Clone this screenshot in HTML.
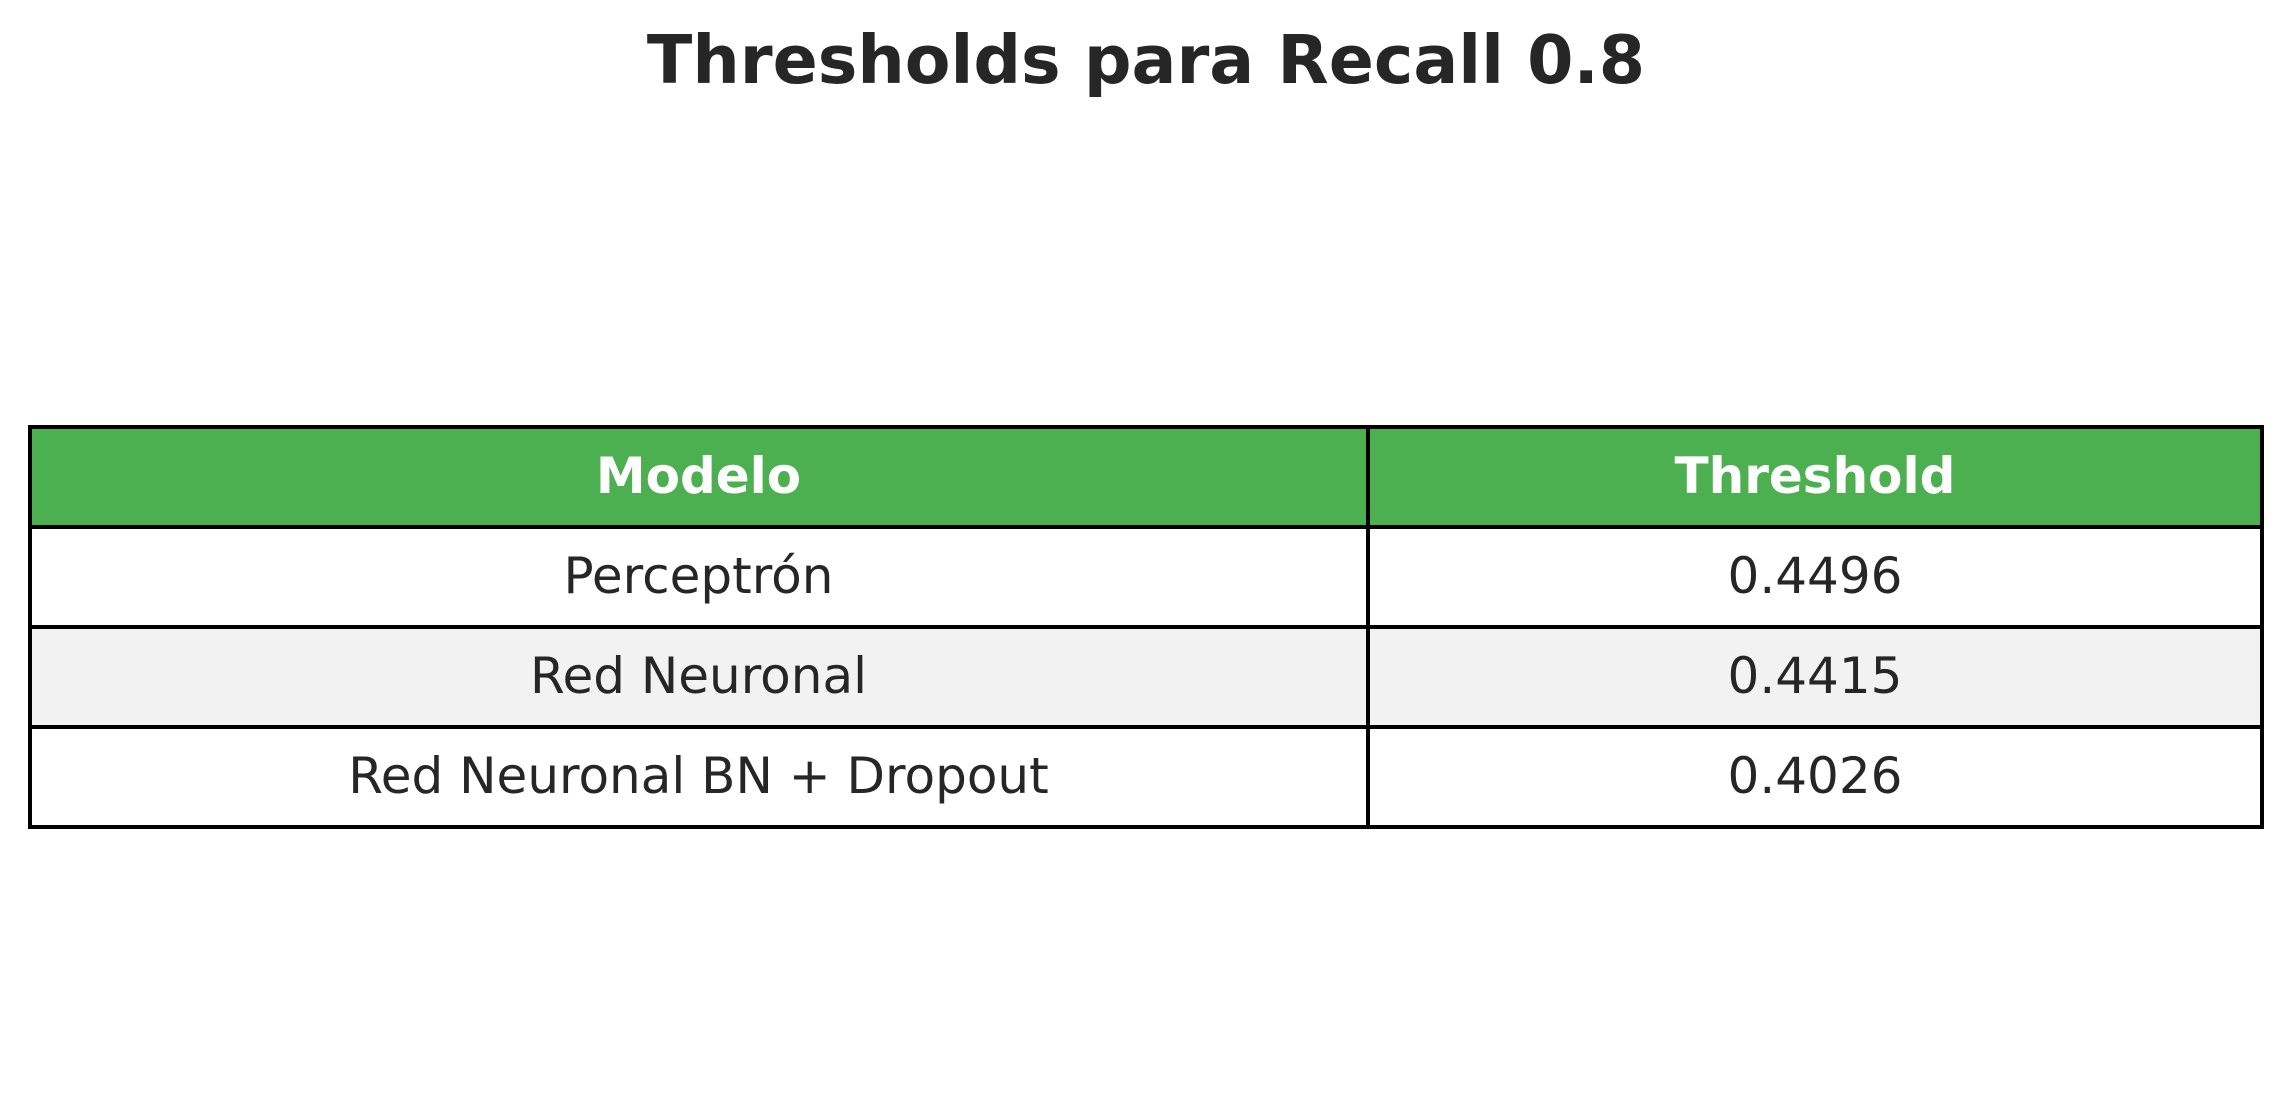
<!DOCTYPE html>
<html><head><meta charset="utf-8"><style>
html,body{margin:0;padding:0;background:#fff;width:2292px;height:1119px;overflow:hidden;position:relative;font-family:"DejaVu Sans","Liberation Sans",sans-serif;color:#262626}
.title{position:absolute;left:0;width:2292px;top:18px;text-align:center;font-weight:bold;font-size:66.6px;line-height:84px}
.c{position:absolute;display:flex;align-items:center;justify-content:center;font-size:50px;box-sizing:border-box;padding-bottom:3px}
.line{position:absolute;background:#000}
</style></head><body>
<div class="title">Thresholds para Recall 0.8</div>
<div style="position:absolute;left:29px;top:427px;width:2233px;height:100px;background:#4caf50"></div>
<div style="position:absolute;left:29px;top:627px;width:2233px;height:100px;background:#f2f2f2"></div>
<div class="c" style="left:29px;top:427px;width:1339px;height:100px;color:#fff;font-weight:bold">Modelo</div>
<div class="c" style="left:1368px;top:427px;width:894px;height:100px;color:#fff;font-weight:bold">Threshold</div>
<div class="c" style="left:29px;top:527px;width:1339px;height:100px">Perceptrón</div>
<div class="c" style="left:1368px;top:527px;width:894px;height:100px">0.4496</div>
<div class="c" style="left:29px;top:627px;width:1339px;height:100px">Red Neuronal</div>
<div class="c" style="left:1368px;top:627px;width:894px;height:100px">0.4415</div>
<div class="c" style="left:29px;top:727px;width:1339px;height:100px">Red Neuronal BN + Dropout</div>
<div class="c" style="left:1368px;top:727px;width:894px;height:100px">0.4026</div>
<div class="line" style="left:28px;top:425px;width:2236px;height:4px"></div>
<div class="line" style="left:28px;top:525px;width:2236px;height:4px"></div>
<div class="line" style="left:28px;top:625px;width:2236px;height:4px"></div>
<div class="line" style="left:28px;top:725px;width:2236px;height:4px"></div>
<div class="line" style="left:28px;top:825px;width:2236px;height:4px"></div>
<div class="line" style="left:28px;top:425px;width:4px;height:404px"></div>
<div class="line" style="left:1366px;top:425px;width:4px;height:404px"></div>
<div class="line" style="left:2260px;top:425px;width:4px;height:404px"></div>
</body></html>
